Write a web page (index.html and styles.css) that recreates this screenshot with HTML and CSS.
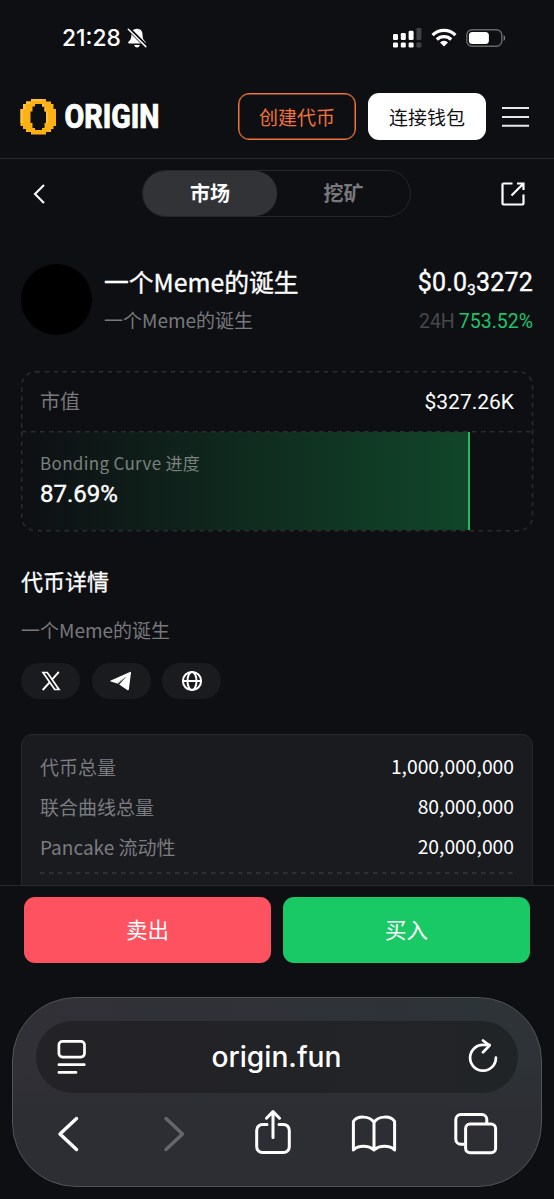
FILE: index.html
```html
<!DOCTYPE html>
<html lang="zh-CN">
<head>
<meta charset="utf-8">
<meta name="viewport" content="width=device-width, initial-scale=1">
<title>ORIGIN</title>
<link rel="stylesheet" href="styles.css">
</head>
<body>
<div class="screen">
  <div class="status">
    <span class="time">21:28</span>
    <svg class="bell" width="20" height="20" viewBox="0 0 20 20"><path d="M10 .8C6.200.8 4.400 3.700 4.400 7c0 4-1.200 5-2.900 6.800-.7.9-.3 1.700.7 1.700h15.600c1 0 1.400-.8.7-1.700-1.700-1.800-2.900-2.800-2.900-6.800 0-3.300-1.800-6.200-5.600-6.200z" fill="#fff"/><path d="M7.200 17h5.600c-.3 1.600-1.400 2.500-2.800 2.500S7.500 18.600 7.200 17z" fill="#fff"/><path d="M2 1.200 19.500 18.500" stroke="#0e0f13" stroke-width="4"/><path d="M1.300 1.300 18.800 18.600" stroke="#fff" stroke-width="1.500" stroke-linecap="round"/></svg>
    <svg class="signal" width="30" height="20" viewBox="0 0 30 20"><g fill="#fff"><rect x="0" y="6" width="5" height="6" rx="1.300"/><rect x="0" y="14.500" width="5" height="5" rx="1.300"/><rect x="7.800" y="5" width="5" height="7" rx="1.300"/><rect x="7.800" y="14.500" width="5" height="5" rx="1.300"/><rect x="15.600" y="2.700" width="5" height="9.300" rx="1.300"/><rect x="15.600" y="14.500" width="5" height="5" rx="1.300"/></g><g fill="#414246"><rect x="23.400" y="0" width="5" height="12" rx="1.300"/><rect x="23.400" y="14.500" width="5" height="5" rx="1.300"/></g></svg>
    <svg class="wifi" width="26" height="19" viewBox="0 0 26 19"><g fill="none" stroke="#fff" stroke-width="3.300"><path d="M1.600 7.100a16.200 16.200 0 0 1 22.800 0"/><path d="M5.800 11.500a10.300 10.300 0 0 1 14.400 0"/></g><path d="M9 14.400a5.800 5.800 0 0 1 8 0L13 18.500z" fill="#fff"/></svg>
    <svg class="battery" width="40" height="18" viewBox="0 0 40 18"><rect x=".8" y=".8" width="35" height="16.400" rx="5.300" fill="none" stroke="#66676b" stroke-width="1.400"/><rect x="2.900" y="2.900" width="20" height="12.200" rx="3.500" fill="#fff"/><path d="M37.600 6c2.200.8 2.200 5.200 0 6z" fill="#77787c"/></svg>
  </div>

  <header class="header">
    <svg class="logo" width="140" height="38" viewBox="0 0 140 38">
      <path fill="#fdb113" fill-rule="evenodd" d="M11 1H26V3.500H31V6H33.500V11H36V28H33.500V31H31V34H26V36.500H11V34H6V31H3V28H.5V11H3V6H6V3.500H11zM15 6V8.500H12.500V13.500H10.500V25H12.500V30H15V32H22V30H24.500V25H26V13.500H24.500V8.500H22V6z"/>
      <path fill="#ffc23e" d="M11 1H22V3H11zM6 3.500H11V6H6zM3 6H6V11H3zM.5 11H3V25H.5zM22 6H24.500V8.500H22zM24.500 8.500H26V13.500H24.500zM26 13.500H28V25H26z"/>
      <text class="logo-text" x="44.500" y="29.800" textLength="95" lengthAdjust="spacingAndGlyphs">ORIGIN</text>
    </svg>
    <button class="btn create">创建代币</button>
    <button class="btn connect">连接钱包</button>
    <svg class="burger" width="27" height="22" viewBox="0 0 27 22"><path d="M0 2H27M0 11H27M0 19.700H27" stroke="#e8e8ea" stroke-width="2"/></svg>
  </header>

  <nav class="tabs">
    <svg width="14" height="22" viewBox="0 0 14 22"><path d="M11 2 2 11l9 9" fill="none" stroke="#fff" stroke-width="2.100"/></svg>
    <div class="switch"><span class="tab active">市场</span><span class="tab">挖矿</span></div>
    <svg width="26" height="26" viewBox="0 0 26 26"><path d="M12.500 2.500H3.500a1 1 0 0 0-1 1v19a1 1 0 0 0 1 1h19a1 1 0 0 0 1-1V13.500M17 2.500h6.500V9M23.500 2.500 11.500 14.500" fill="none" stroke="#fff" stroke-width="2.200"/></svg>
  </nav>

  <main>
    <section class="token">
      <div class="avatar"></div>
      <div class="names"><div class="name">一个Meme的诞生</div><div class="sub">一个Meme的诞生</div></div>
      <div class="quote"><div class="price">$0.0<span class="low">3</span>3272</div><div class="change"><span class="period">24H</span><span class="up">753.52%</span></div></div>
    </section>

    <section class="curve">
      <div class="cap"><span class="cap-label">市值</span><span class="cap-value">$327.26K</span></div>
      <div class="progress">
        <div class="fill" style="width: 87.69%"></div>
        <div class="progress-text"><div class="progress-label">Bonding Curve 进度</div><div class="progress-value">87.69%</div></div>
      </div>
      <svg class="outline" width="513" height="161" viewBox="0 0 513 161"><g fill="none" stroke="#2c2d31" stroke-width="1.400" stroke-dasharray="4.500 4.500"><rect x=".7" y=".7" width="510.800" height="159" rx="14"/><path d="M1 60.700H512"/></g></svg>
    </section>

    <h2 class="title">代币详情</h2>
    <p class="desc">一个Meme的诞生</p>
    <div class="links">
      <a class="link"><svg width="20" height="20" viewBox="0 0 20 20"><path d="M2 1.500h4.300l11.700 17h-4.300z" fill="none" stroke="#fff" stroke-width="1.700"/><path d="M17.800 1 11 8.600M8.600 11.400 1.700 19" stroke="#fff" stroke-width="1.900"/></svg></a>
      <a class="link"><svg width="22" height="20" viewBox="0 0 22 20"><path d="M20.500.8.8 9.400c-.8.400-.7.900 0 1.200l5.700 1.700L16.500 5.500l-7.300 8 8 5.500c.9.500 1.500.2 1.700-.8L21 1.500z" fill="#fff"/><path d="M16.500 5.500 6.500 12.300l1.200.4z" fill="#fff"/></svg></a>
      <a class="link"><svg width="22" height="22" viewBox="0 0 22 22"><g fill="none" stroke="#fff" stroke-width="2"><circle cx="11" cy="11" r="9.100"/><ellipse cx="11" cy="11" rx="4.500" ry="9.100"/><path d="M2 11H20"/></g></svg></a>
    </div>

    <section class="panel">
      <div class="row"><span>代币总量</span><b>1,000,000,000</b></div>
      <div class="row"><span>联合曲线总量</span><b>80,000,000</b></div>
      <div class="row"><span>Pancake 流动性</span><b>20,000,000</b></div>
      <svg class="rule" width="474" height="2" viewBox="0 0 474 2"><path d="M0 1H474" stroke="#36373b" stroke-width="1.400" stroke-dasharray="4.500 4.500"/></svg>
    </section>
  </main>

  <div class="trade"><button class="sell">卖出</button><button class="buy">买入</button></div>

  <footer class="browser">
    <div class="address">
      <svg width="31" height="36" viewBox="0 0 31 36"><g fill="none" stroke="#fff" stroke-width="2.700" stroke-linecap="round"><rect x="2.900" y="2.400" width="25.600" height="15.700" rx="3.500"/><path d="M2.900 25.700H28.300M2.900 33.400H20"/></g></svg>
      <span class="url">origin.fun</span>
      <svg width="30" height="36" viewBox="0 0 30 36"><g fill="none" stroke="#fff" stroke-width="2.700" stroke-linecap="round" stroke-linejoin="round"><path d="M27.900 18.700A12.900 12.900 0 1 1 15 5.900h6.500"/><path d="m15 1.500 6.500 5-6.500 6.700"/></g></svg>
    </div>
    <div class="tools">
      <svg width="48" height="48" viewBox="0 0 48 48"><path d="M29.500 8.500 13 24l16.500 15.500" fill="none" stroke="#fff" stroke-width="3.400" stroke-linecap="round" stroke-linejoin="round"/></svg>
      <svg width="48" height="48" viewBox="0 0 48 48"><path d="M18 8.500 34.500 24 18 39.500" fill="none" stroke="#66676c" stroke-width="3.400" stroke-linecap="round" stroke-linejoin="round"/></svg>
      <svg width="48" height="48" viewBox="0 0 48 48"><g fill="none" stroke="#fff" stroke-width="3" stroke-linecap="round" stroke-linejoin="round"><path d="M18 14.400h-4.500a5.800 5.800 0 0 0-5.800 5.800v16.600a5.800 5.800 0 0 0 5.800 5.800h21a5.800 5.800 0 0 0 5.800-5.800V20.200a5.800 5.800 0 0 0-5.800-5.800H30M24 27.500V2M17.500 8.200 24 1.600l6.500 6.600"/></g></svg>
      <svg width="48" height="48" viewBox="0 0 48 48"><g fill="none" stroke="#fff" stroke-width="3" stroke-linecap="round" stroke-linejoin="round"><path d="M24 12.500C20 5.500 7 5.500 3.400 11.500V40c5-5 15-5 20.600 0 5.600-5 15.600-5 20.600 0V11.500C41 5.500 28 5.500 24 12.500zM24 12.500v27.500"/></g></svg>
      <svg width="48" height="48" viewBox="0 0 48 48"><g fill="none" stroke="#fff" stroke-width="3"><path d="M13.500 34.200H9.800a5 5 0 0 1-5-5V9.500a5 5 0 0 1 5-5h21a5 5 0 0 1 5 5v3.500"/><rect x="14.600" y="14" width="30" height="28.700" rx="4.500"/></g></svg>
    </div>
  </footer>
</div>
</body>
</html>
```
FILE: styles.css
```css
* { box-sizing: border-box; }
body { margin: 0; background: #0e0f13; color: #fff; font-family: "Noto Sans CJK SC", sans-serif; }
svg { display: block; flex: none; }
button { border: 0; padding: 0; font: inherit; }
.screen { width: 554px; height: 1199px; overflow: hidden; display: flex; flex-direction: column; white-space: nowrap; }

.status { height: 75px; flex: none; display: flex; align-items: center; padding: 0 48px 0 62px; }
.time { width: 65px; font: 500 22.800px/30px Inter, sans-serif; padding-top: 1px; }
.signal { margin-left: auto; }
.wifi { margin-left: 8px; }
.battery { margin-left: 9px; }

.header { height: 84px; flex: none; display: flex; align-items: center; padding: 0 25px 0 20px; border-bottom: 1px solid #2b2c30; }
.logo { overflow: visible; }
.logo-text { font: 800 32.500px "Roboto", sans-serif; fill: #fff; stroke: #fff; stroke-width: .7px; }
.btn { width: 118px; height: 47px; border-radius: 11px; font-size: 19px; line-height: 43px; }
.create { margin-left: auto; background: transparent; border: 1.500px solid #f07339; color: #f07339; box-shadow: inset 0 0 0 .5px #f07339; }
.connect { margin-left: 12px; background: #fff; color: #101114; }
.burger { margin-left: 16px; }

.tabs { margin-top: 11px; height: 47px; flex: none; display: flex; align-items: center; justify-content: space-between; padding: 0 28.500px 0 33px; }
.switch { width: 269px; height: 47px; display: flex; border: 1.500px solid #26272b; border-radius: 24px; margin-left: 7px; }
.tab { flex: 1; text-align: center; font-weight: 700; font-size: 20px; line-height: 43px; color: #77787b; border-radius: 22px; }
.active { color: #fff; background: #323337; }

main { flex: 1; min-height: 0; overflow: hidden; padding: 47px 21px 0; display: flex; flex-direction: column; }
.token { height: 71px; flex: none; display: flex; }
.avatar { width: 71px; height: 71px; border-radius: 50%; background: #000; }
.names { margin-left: 12px; }
.name { font-size: 24.800px; line-height: 34px; -webkit-text-stroke: .35px #fff; }
.sub { font-size: 19px; line-height: 28px; margin-top: 8px; color: #77787b; }
.quote { margin-left: auto; text-align: right; font-family: Roboto, sans-serif; }
.price { height: 34px; font-size: 25px; line-height: 37px; letter-spacing: .2px; -webkit-text-stroke: .35px #fff; }
.low { font-size: 15px; position: relative; top: 4px; }
.change { font-size: 19.500px; line-height: 29px; margin-top: 9px; }
.period { color: #46474b; margin-right: 4px; }
.up { color: #1dc568; }

.curve { position: relative; height: 160px; flex: none; margin-top: 36px; border-radius: 14px; }
.outline { position: absolute; left: 0; top: 0; }
.cap { height: 61px; display: flex; justify-content: space-between; align-items: center; padding: 0 19px 2px; font-size: 20px; }
.cap-label { color: #77787b; }
.cap-value { font: 400 21px/30px Roboto, sans-serif; padding-top: 2px; }
.progress { position: relative; height: 99px; padding: 18px 19px 0; border-radius: 0 0 14px 14px; overflow: hidden; }
.fill { position: absolute; left: 0; top: 0; height: 98px; border-right: 2px solid #27b862; background: linear-gradient(90deg, rgba(25, 198, 99, 0), rgba(20, 124, 64, .5)); }
.progress-text { position: relative; }
.progress-label { font-size: 17px; line-height: 26px; color: #7b817f; letter-spacing: .33px; }
.progress-value { font: 400 24px/36px Roboto, sans-serif; -webkit-text-stroke: .4px #fff; }

.title { margin: 34px 0 0; font-size: 22px; line-height: 31px; font-weight: 400; -webkit-text-stroke: .3px #fff; }
.desc { margin: 20px 0 0; font-size: 19px; line-height: 28px; color: #77787b; }
.links { display: flex; gap: 11.700px; margin-top: 19px; }
.link { width: 59px; height: 36px; border-radius: 18px; background: #1a1b1f; display: flex; align-items: center; justify-content: center; }

.panel { height: 180px; flex: none; margin-top: 35px; padding: 11px 18px 0; background: #1a1b1f; border: 1.500px solid #27282c; border-radius: 11px; }
.row { height: 40px; display: flex; justify-content: space-between; align-items: center; font-size: 19px; color: #7b7c80; }
.row b { font-weight: 400; font-size: 19.300px; color: #fff; }
.rule { margin-top: 6px; }

.trade { height: 112px; flex: none; display: flex; gap: 12px; padding: 11px 24px 0; border-top: 1px solid #292a2e; }
.trade button { flex: 1; height: 66px; border-radius: 11px; color: #fff; font-size: 21.500px; line-height: 60px; padding-bottom: 3px; }
.sell { background: #ff5261; }
.buy { background: #19c965; }

.browser { width: 530px; height: 190px; flex: none; margin: 0 12px 12px; padding: 23px 23px 0; border: 1px solid #515358; border-radius: 64px; background: linear-gradient(180deg, rgba(45, 46, 51, 0) 35%, #2d2e33 60%), linear-gradient(90deg, #313036, #2d3337); }
.address { height: 72px; border-radius: 36px; background: linear-gradient(90deg, #232226, #212427); display: flex; align-items: center; justify-content: space-between; padding: 0 20px; }
.url { font: 500 28.200px/40px Inter, sans-serif; margin-left: -2px; }
.tools { display: flex; justify-content: space-between; padding: 17px 19px 0 11px; }
```
